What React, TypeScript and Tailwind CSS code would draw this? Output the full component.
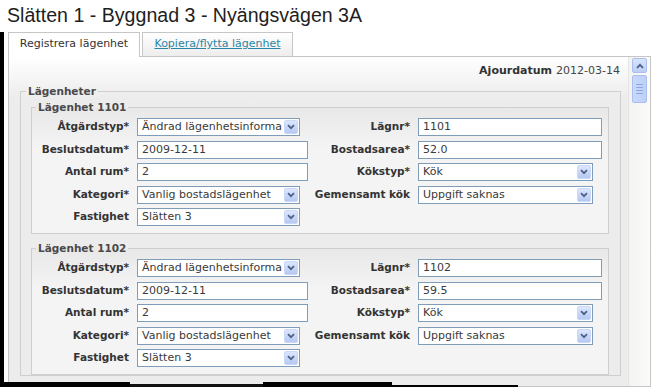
import React from "react";

function Chevron({ up = false }: { up?: boolean }) {
  return (
    <svg width="8" height="6" viewBox="0 0 8 6" className={up ? "rotate-180" : ""}>
      <path d="M1 1.2 L4 4.2 L7 1.2" fill="none" stroke="#4d6185" strokeWidth="1.8" />
    </svg>
  );
}

function Sel({ value, w }: { value: string; w: string }) {
  return (
    <div className={`flex h-[18px] ${w} items-stretch border border-[#7f9db9] bg-white`}>
      <div className="flex min-w-0 flex-1 items-center overflow-hidden whitespace-nowrap pl-[4px] text-[11px] leading-[16px] text-[#3a3a3a]">
        {value}
      </div>
      <div className="m-[1px] ml-[2px] flex w-[14px] shrink-0 items-center justify-center rounded-[2px] border border-[#c9d7f8] bg-[linear-gradient(to_bottom,#dce6fd,#b6c9f4)]">
        <Chevron />
      </div>
    </div>
  );
}

function Inp({ value, w }: { value: string; w: string }) {
  return (
    <div className={`flex h-[18px] ${w} items-center border border-[#7f9db9] bg-white pl-[4px] text-[11px] leading-[16px] text-[#3a3a3a] whitespace-nowrap`}>
      {value}
    </div>
  );
}

function Label({ children }: { children: React.ReactNode }) {
  return (
    <div className="flex h-[18px] items-center justify-end whitespace-nowrap text-[10.5px] font-bold text-[#333]">
      {children}
    </div>
  );
}

function Apartment({ nr, area, first }: { nr: string; area: string; first?: boolean }) {
  return (
    <fieldset
      className={`${first ? "" : "mt-[8px]"} border border-[#cfcfcf] bg-[linear-gradient(to_bottom,#e8e8e8,#f4f4f4_40px)] pb-[7px] pt-[4px] pr-[6px]`}
    >
      <legend className="ml-[4px] px-[2px] text-[10.5px] font-bold leading-[13px] text-[#4a4a4a]">
        Lägenhet {nr}
      </legend>
      <div className="grid grid-cols-[97px_171px_94px_184px] gap-x-2 gap-y-[4.5px]">
        <Label>Åtgärdstyp*</Label>
        <Sel value="Ändrad lägenhetsinformation" w="w-[163px]" />
        <Label>Lägnr*</Label>
        <Inp value={nr} w="w-[184px]" />

        <Label>Beslutsdatum*</Label>
        <Inp value="2009-12-11" w="w-[171px]" />
        <Label>Bostadsarea*</Label>
        <Inp value={area} w="w-[184px]" />

        <Label>Antal rum*</Label>
        <Inp value="2" w="w-[171px]" />
        <Label>Kökstyp*</Label>
        <Sel value="Kök" w="w-[175px]" />

        <Label>Kategori*</Label>
        <Sel value="Vanlig bostadslägenhet" w="w-[163px]" />
        <Label>Gemensamt kök</Label>
        <Sel value="Uppgift saknas" w="w-[175px]" />

        <Label>Fastighet</Label>
        <Sel value="Slätten 3" w="w-[163px]" />
        <div />
        <div />
      </div>
    </fieldset>
  );
}

export default function App() {
  return (
    <div className="relative flex h-[387px] w-[655px] flex-col overflow-hidden bg-white font-['DejaVu_Sans',sans-serif]">
      <h1 className="h-[32px] shrink-0 pl-[7px] pt-[3px] font-['Liberation_Sans',Arial,sans-serif] text-[19.6px] font-normal leading-[24px] text-[#1e1e1e]">
        Slätten 1 - Byggnad 3 - Nyängsvägen 3A
      </h1>

      <div className="flex min-h-0 flex-1">
        <div className="w-[4px] shrink-0 bg-black" />
        <div className="w-[4px] shrink-0" />
        <div className="flex w-[643px] flex-col">
          {/* tabs */}
          <div className="flex h-[24px] shrink-0 items-end">
            <div className="relative z-10 -mb-px flex h-[25px] w-[132px] items-center justify-center border-x border-t border-[#c6c6c6] bg-white pb-[1px] text-[11px] text-[#333]">
              Registrera lägenhet
            </div>
            <div className="ml-[2px] flex h-[24px] w-[151px] items-center justify-center border-x border-t border-[#c6c6c6] bg-[linear-gradient(to_bottom,#ffffff,#ededed)] text-[11px] text-[#2a86a6] underline">
              Kopiera/flytta lägenhet
            </div>
          </div>

          {/* panel */}
          <div className="flex min-h-0 flex-1 border border-[#c6c6c6]">
            <div className="flex min-w-0 flex-1 flex-col overflow-hidden bg-[linear-gradient(to_bottom,#ffffff,#ececec_42px)]">
              <div className="flex justify-end pr-[8px] pt-[7px] text-[11px] leading-[14px] text-[#444]">
                <span className="font-bold text-[#333]">Ajourdatum</span>
                <span className="ml-[4px]">2012-03-14</span>
              </div>

              <fieldset className="ml-[11px] mr-[7px] mt-[7px] border border-[#cfcfcf] pt-[3px]">
                <legend className="ml-[5px] px-[2px] text-[10.5px] font-bold leading-[13px] text-[#4a4a4a]">
                  Lägenheter
                </legend>
                <div className="pl-[10px] pr-[11px]">
                  <Apartment nr="1101" area="52.0" first />
                  <Apartment nr="1102" area="59.5" />
                </div>
              </fieldset>
            </div>

            {/* scrollbar */}
            <div className="flex w-[22px] shrink-0 flex-col items-center border-l border-[#e4e4e4] bg-[linear-gradient(to_right,#f3f3f1,#fbfbfa)] pt-[1px]">
              <div className="flex h-[15px] w-[15px] items-center justify-center rounded-[2px] border border-[#a9bff0] bg-[linear-gradient(to_bottom,#d9e4fd,#bccdf6)]">
                <Chevron up />
              </div>
              <div className="mt-[2px] flex h-[28px] w-[15px] flex-col items-center justify-center gap-[2px] rounded-[2px] border border-[#a9bff0] bg-[linear-gradient(to_right,#c9d8fb,#bfd0f8)]">
                <div className="h-px w-[7px] bg-[#8ea8e4]" />
                <div className="h-px w-[7px] bg-[#8ea8e4]" />
                <div className="h-px w-[7px] bg-[#8ea8e4]" />
                <div className="h-px w-[7px] bg-[#8ea8e4]" />
              </div>
            </div>
          </div>
        </div>
      </div>

      {/* screenshot edge artifact */}
      <div className="absolute bottom-0 left-0 flex items-end">
        <div className="h-[5px] w-[130px] bg-black" />
        <div className="h-[3px] w-[133px] bg-[#111]" />
        <div className="h-[5px] w-[129px] bg-black" />
        <div className="h-[2px] w-[126px] bg-black" />
      </div>
    </div>
  );
}
